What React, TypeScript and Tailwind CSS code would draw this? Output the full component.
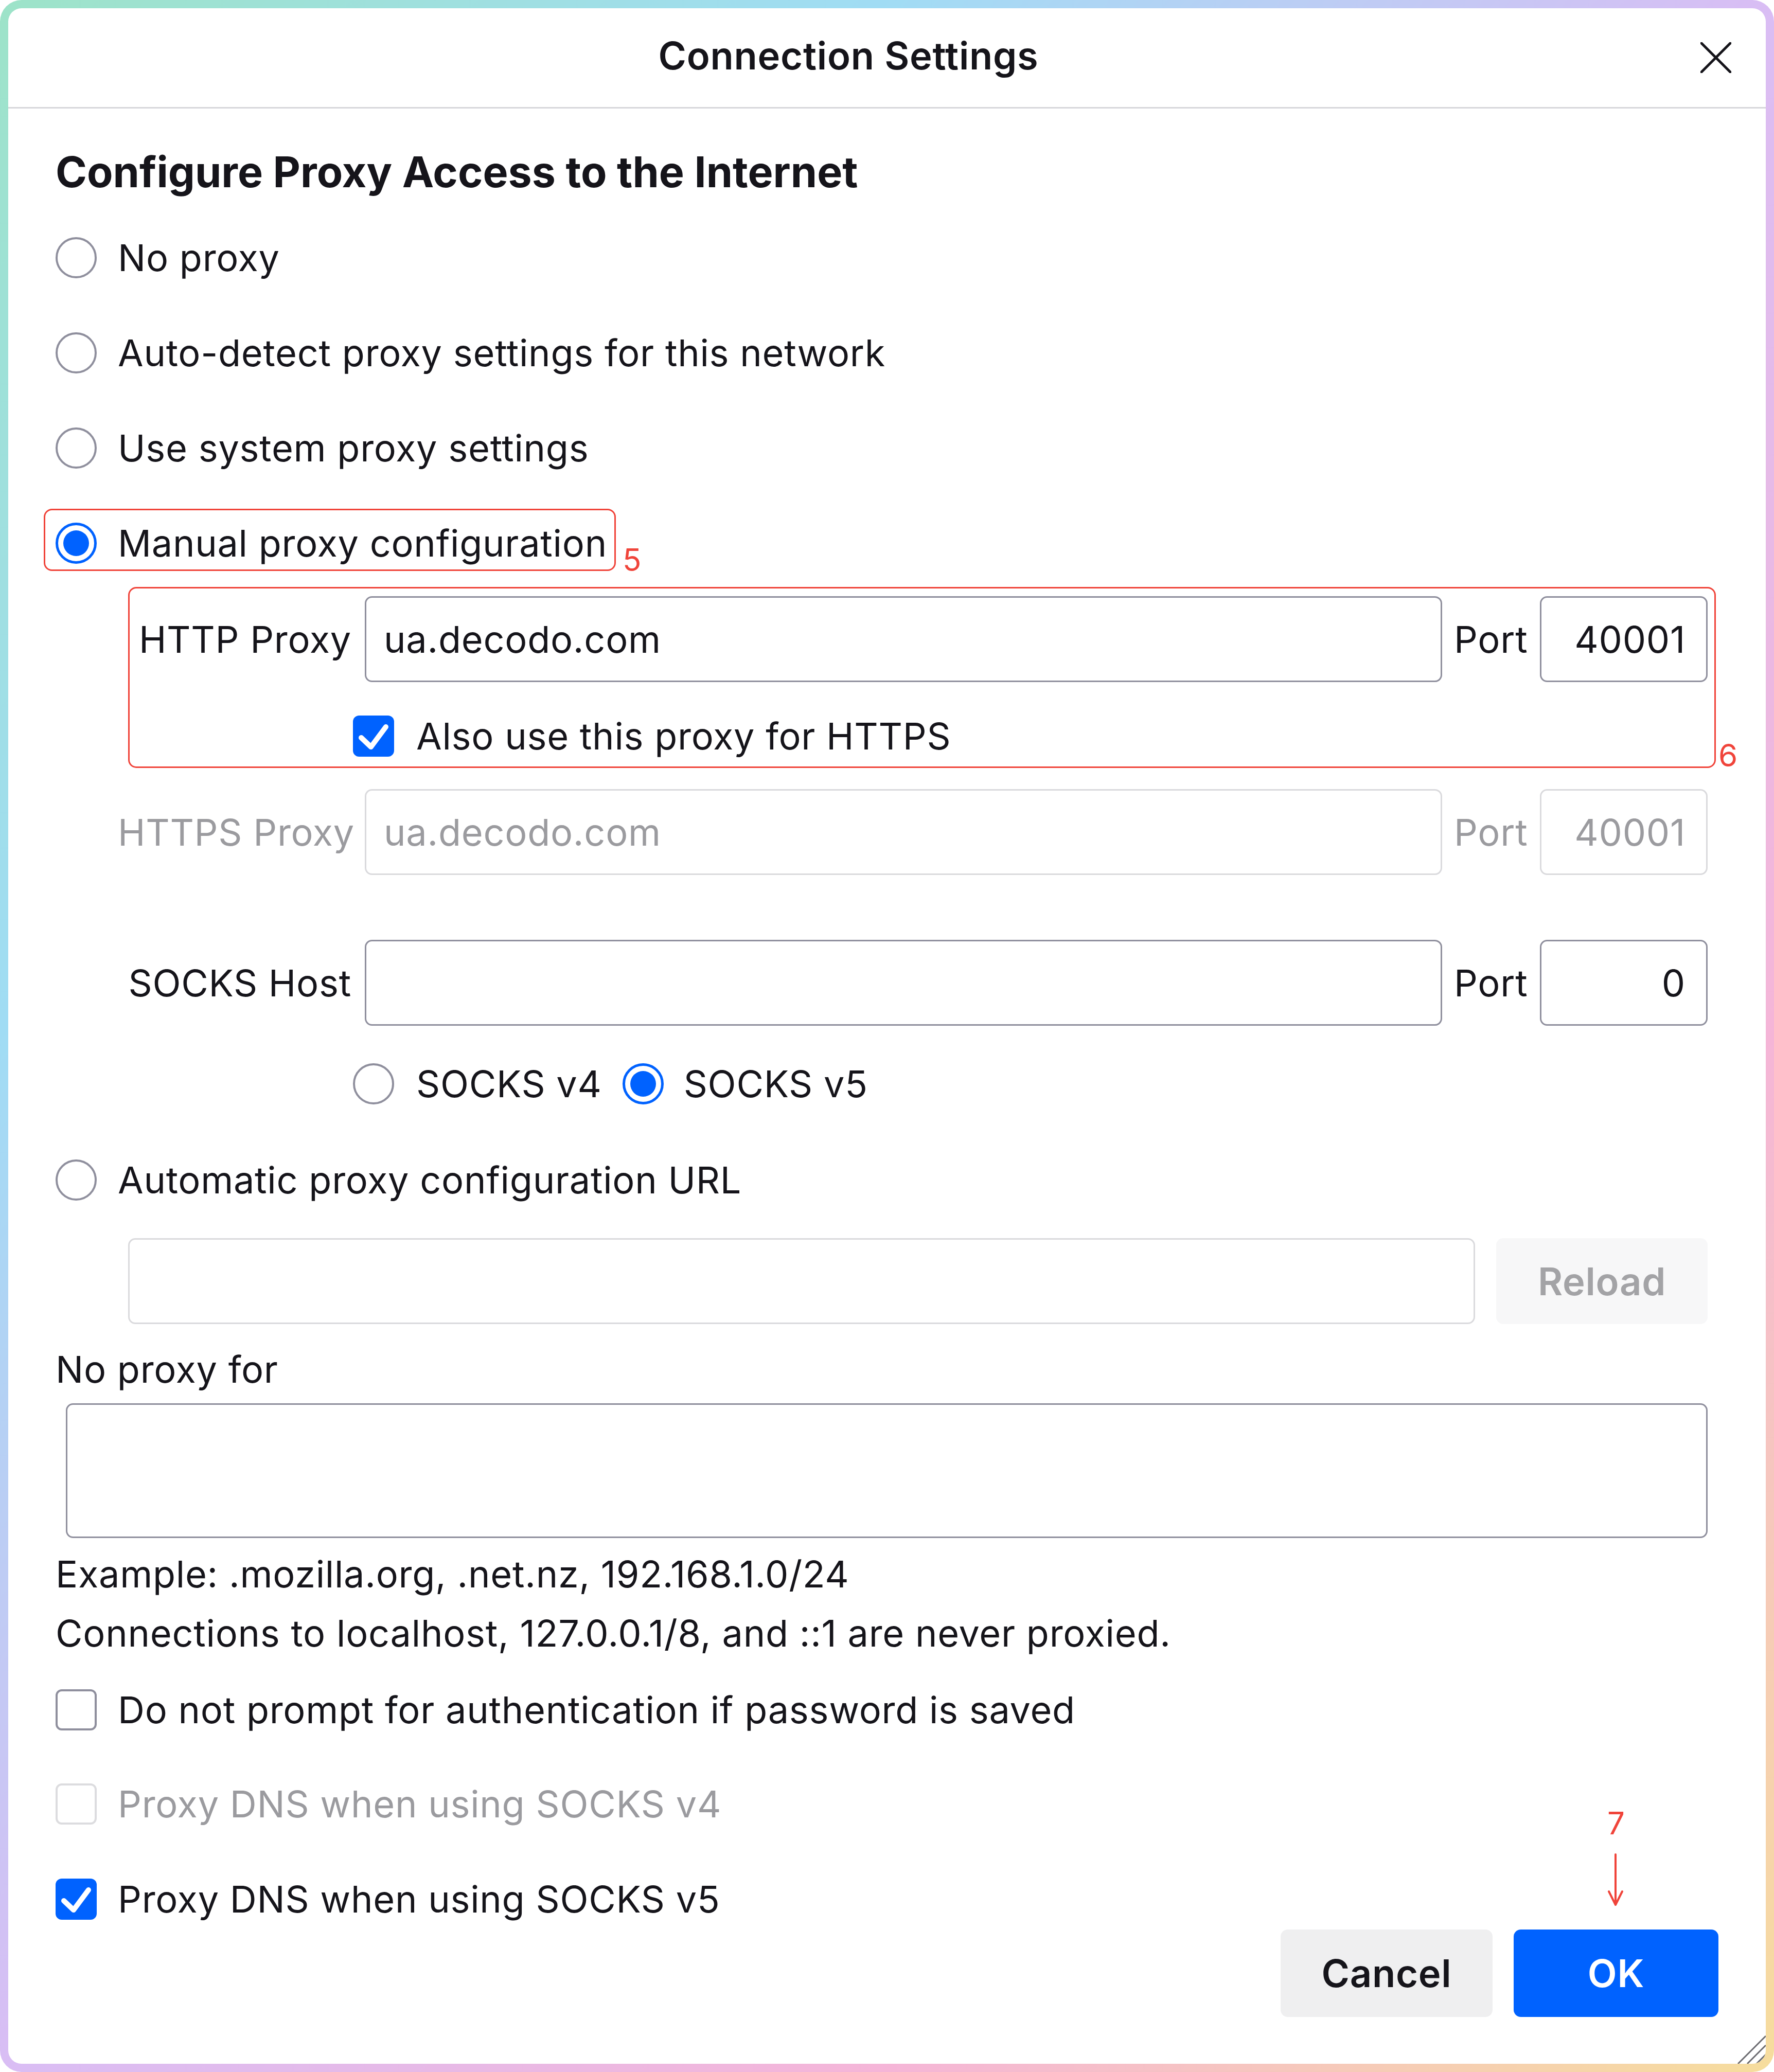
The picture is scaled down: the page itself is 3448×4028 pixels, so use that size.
import clsx from "clsx";

const FONT = "font-['Inter','Noto_Sans',sans-serif]";

function Radio({ checked = false }: { checked?: boolean }) {
  if (checked) {
    return (
      <span className="flex h-[80px] w-[80px] shrink-0 items-center justify-center rounded-full border-[5px] border-[#0062ff] bg-white">
        <span className="h-[50px] w-[50px] rounded-full bg-[#0062ff]" />
      </span>
    );
  }
  return <span className="h-[80px] w-[80px] shrink-0 rounded-full border-[4px] border-[#8f8f9d] bg-white" />;
}

function Checkbox({ checked = false, disabled = false }: { checked?: boolean; disabled?: boolean }) {
  if (checked) {
    return (
      <span className="flex h-[80px] w-[80px] shrink-0 items-center justify-center rounded-[12px] bg-[#0062ff]">
        <svg viewBox="0 0 80 80" className="h-[80px] w-[80px]">
          <path d="M16 43 L35 61 L64 22" fill="none" stroke="#fff" strokeWidth="10" strokeLinecap="round" strokeLinejoin="round" />
        </svg>
      </span>
    );
  }
  return (
    <span
      className={clsx(
        "h-[80px] w-[80px] shrink-0 rounded-[12px] border-[4px] bg-white",
        disabled ? "border-[#dcdcdf]" : "border-[#8f8f9d]"
      )}
    />
  );
}

function Field({
  value = "",
  disabled = false,
  right = false,
  className,
}: {
  value?: string;
  disabled?: boolean;
  right?: boolean;
  className?: string;
}) {
  return (
    <input
      readOnly
      disabled={disabled}
      value={value}
      className={clsx(
        "h-[167px] min-w-0 rounded-[14px] border-[3px] bg-white text-[72px] tracking-[0.01em] outline-none",
        right ? "pr-[40px] pl-[20px] text-right" : "px-[34px]",
        disabled ? "border-[#dadadd] text-[#9b9b9f]" : "border-[#8f8f9d] text-[#15141a]",
        className
      )}
    />
  );
}

function ProxyRow({
  label,
  host,
  port,
  disabled = false,
  className,
}: {
  label: string;
  host: string;
  port: string;
  disabled?: boolean;
  className?: string;
}) {
  return (
    <div className={clsx("ml-[121px] mr-[21px] flex h-[167px] items-center", disabled && "text-[#9b9b9f]", className)}>
      <span className="w-[454px] shrink-0 text-right whitespace-nowrap">{label}</span>
      <Field value={host} disabled={disabled} className="ml-[26px] flex-1" />
      <span className="ml-[23px] w-[144px] shrink-0">Port</span>
      <Field value={port} disabled={disabled} right className="ml-[23px] w-[326px] shrink-0" />
    </div>
  );
}

function Option({ label, checked, className }: { label: string; checked?: boolean; className?: string }) {
  return (
    <div className={clsx("flex h-[100px] items-center gap-[41px]", className)}>
      <Radio checked={checked} />
      <span>{label}</span>
    </div>
  );
}

export default function App() {
  return (
    <div
      className={`${FONT} h-[4028px] w-[3448px] rounded-[42px] bg-[linear-gradient(to_bottom_right,#9de3c8,#a0dcf4_25%,#d9bdf4_50%,#f5b5d7_75%,#f6dd9c)] p-[16px]`}
    >
      <div className="relative flex h-full flex-col overflow-hidden rounded-[26px] bg-white text-[#15141a]">
        <header className="flex h-[195px] shrink-0 items-center border-b-[3px] border-[#d7d7db]">
          <h1 className="flex-1 pb-[8px] text-center text-[74px] font-semibold tracking-[0.01em]">Connection Settings</h1>
          <button type="button" className="mr-[44px] flex h-[106px] w-[106px] items-center justify-center">
            <svg viewBox="0 0 60 60" className="h-[60px] w-[60px]">
              <path d="M2 2 L58 58 M58 2 L2 58" stroke="#15141a" strokeWidth="5" strokeLinecap="round" />
            </svg>
          </button>
        </header>

        <main className="flex flex-col px-[92px] text-[72px] leading-none tracking-[0.01em]">
          <h2 className="mt-[73px] flex h-[100px] items-center text-[82.5px] font-bold tracking-normal">
            Configure Proxy Access to the Internet
          </h2>

          <Option label="No proxy" className="mt-[67px]" />
          <Option label="Auto-detect proxy settings for this network" className="mt-[85px]" />
          <Option label="Use system proxy settings" className="mt-[85px]" />
          <div className="relative mt-[85px]">
            <Option label="Manual proxy configuration" checked />
            <span className="absolute top-[-17px] left-[-23px] h-[121px] w-[1112px] rounded-[16px] border-[3px] border-[#f0443a]" />
            <span className="absolute top-[52px] left-[1102px] text-[60px] text-[#f0443a]">5</span>
          </div>

          <div className="relative mt-[53px]">
            <ProxyRow label="HTTP Proxy" host="ua.decodo.com" port="40001" />
            <div className="mt-[55px] ml-[578px] flex h-[100px] items-center gap-[43px]">
              <Checkbox checked />
              <span>Also use this proxy for HTTPS</span>
            </div>
            <span className="absolute top-[-18px] left-[141px] h-[352px] w-[3086px] rounded-[16px] border-[3px] border-[#f0443a]" />
            <span className="absolute top-[279px] left-[3232px] text-[60px] text-[#f0443a]">6</span>
          </div>

          <ProxyRow label="HTTPS Proxy" host="ua.decodo.com" port="40001" disabled className="mt-[53px]" />
          <ProxyRow label="SOCKS Host" host="" port="0" className="mt-[126px]" />

          <div className="mt-[63px] ml-[578px] flex h-[100px] items-center">
            <Radio />
            <span className="ml-[43px]">SOCKS v4</span>
            <span className="ml-[40px]">
              <Radio checked />
            </span>
            <span className="ml-[39px]">SOCKS v5</span>
          </div>

          <Option label="Automatic proxy configuration URL" className="mt-[87px]" />

          <div className="mt-[63px] ml-[141px] mr-[21px] flex h-[167px] items-center gap-[41px]">
            <Field disabled className="flex-1" />
            <button
              type="button"
              className="h-[167px] w-[411px] shrink-0 rounded-[14px] bg-[#f7f7f8] text-[74px] font-semibold text-[#a3a3a6]"
            >
              Reload
            </button>
          </div>

          <div className="mt-[38px] flex h-[100px] items-center">No proxy for</div>
          <textarea
            readOnly
            className="mt-[16px] ml-[20px] mr-[21px] h-[262px] resize-none rounded-[14px] border-[3px] border-[#8f8f9d] bg-white px-[34px] py-[30px] text-[72px] outline-none"
          />

          <div className="mt-[20px] flex h-[100px] items-center">Example: .mozilla.org, .net.nz, 192.168.1.0/24</div>
          <div className="mt-[15px] flex h-[100px] items-center">
            Connections to localhost, 127.0.0.1/8, and ::1 are never proxied.
          </div>

          <div className="mt-[49px] flex h-[100px] items-center gap-[41px]">
            <Checkbox />
            <span>Do not prompt for authentication if password is saved</span>
          </div>
          <div className="mt-[83px] flex h-[100px] items-center gap-[41px] text-[#9b9b9f]">
            <Checkbox disabled />
            <span>Proxy DNS when using SOCKS v4</span>
          </div>
          <div className="mt-[85px] flex h-[100px] items-center gap-[41px]">
            <Checkbox checked />
            <span>Proxy DNS when using SOCKS v5</span>
          </div>

          <div className="relative mt-[9px] flex h-[170px] justify-end gap-[41px]">
            <span className="absolute top-[-237px] left-[3016px] text-[60px] text-[#f0443a]">7</span>
            <svg viewBox="0 0 40 104" className="absolute top-[-148px] left-[3012px] h-[104px] w-[40px]">
              <path d="M20 2 L20 100 M7 74 L20 100 L33 74" fill="none" stroke="#f0443a" strokeWidth="4" strokeLinecap="round" strokeLinejoin="round" />
            </svg>
            <button type="button" className="h-[170px] w-[412px] rounded-[14px] bg-[#efeff0] text-[74px] font-semibold">
              Cancel
            </button>
            <button type="button" className="h-[170px] w-[398px] rounded-[14px] bg-[#0062ff] text-[74px] font-semibold text-white">
              OK
            </button>
          </div>
        </main>

        <svg viewBox="0 0 60 60" className="absolute right-0 bottom-0 h-[60px] w-[60px]">
          <path d="M60 6 L6 60 M60 24 L24 60 M60 42 L42 60" stroke="#6b6b70" strokeWidth="3" />
        </svg>
      </div>
    </div>
  );
}
